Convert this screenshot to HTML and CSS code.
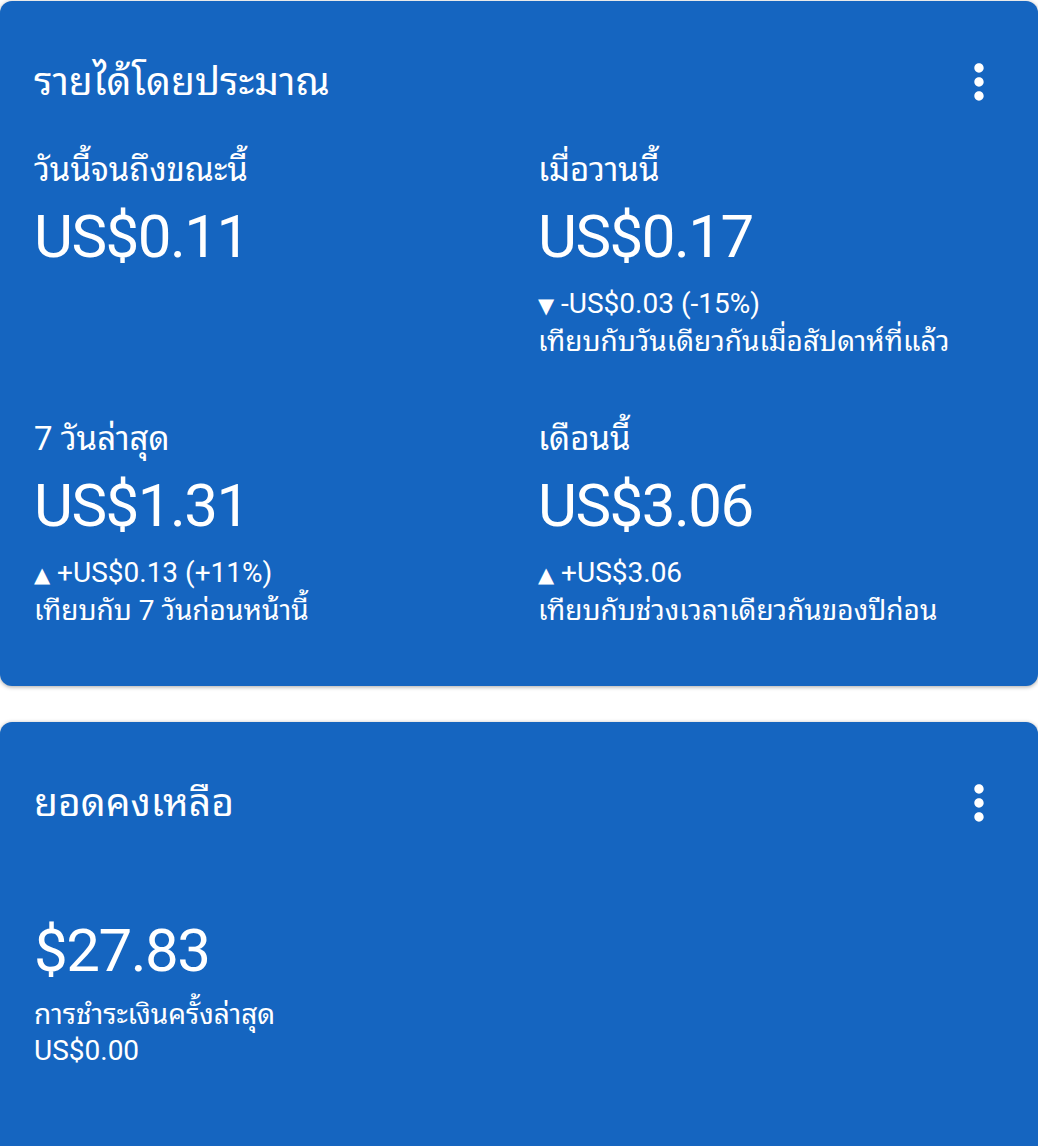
FILE: index.html
```html
<!DOCTYPE html>
<html lang="th">
<head>
    <meta charset="UTF-8">
    <meta name="viewport" content="width=device-width, initial-scale=1.0">
    <title>รายได้โดยประมาณ</title>
    <link rel="stylesheet" href="styles.css">
</head>
<body>
    <div class="container">
        <div class="card">
            <div class="card-header">
                <h2 class="card-title">รายได้โดยประมาณ</h2>
                <button class="menu-button" aria-label="เมนู">
                    <svg viewBox="0 0 24 24" width="56" height="56"><path fill="#fff" d="M12 8c1.1 0 2-.9 2-2s-.9-2-2-2-2 .9-2 2 .9 2 2 2zm0 2c-1.1 0-2 .9-2 2s.9 2 2 2 2-.9 2-2-.9-2-2-2zm0 6c-1.1 0-2 .9-2 2s.9 2 2 2 2-.9 2-2-.9-2-2-2z"/></svg>
                </button>
            </div>

            <div class="stats">
                <div class="stat">
                    <p class="stat-label">วันนี้จนถึงขณะนี้</p>
                    <p class="stat-value">US$0.11</p>
                </div>
                <div class="stat">
                    <p class="stat-label">เมื่อวานนี้</p>
                    <p class="stat-value">US$0.17</p>
                    <p class="stat-change"><span class="arrow">▼</span> -US$0.03 (-15%)</p>
                    <p class="stat-note">เทียบกับวันเดียวกันเมื่อสัปดาห์ที่แล้ว</p>
                </div>
                <div class="stat">
                    <p class="stat-label">7 วันล่าสุด</p>
                    <p class="stat-value">US$1.31</p>
                    <p class="stat-change"><span class="arrow">▲</span> +US$0.13 (+11%)</p>
                    <p class="stat-note">เทียบกับ 7 วันก่อนหน้านี้</p>
                </div>
                <div class="stat">
                    <p class="stat-label">เดือนนี้</p>
                    <p class="stat-value">US$3.06</p>
                    <p class="stat-change"><span class="arrow">▲</span> +US$3.06</p>
                    <p class="stat-note">เทียบกับช่วงเวลาเดียวกันของปีก่อน</p>
                </div>
            </div>
        </div>

        <div class="card">
            <div class="card-header">
                <h2 class="card-title">ยอดคงเหลือ</h2>
                <button class="menu-button" aria-label="เมนู">
                    <svg viewBox="0 0 24 24" width="56" height="56"><path fill="#fff" d="M12 8c1.1 0 2-.9 2-2s-.9-2-2-2-2 .9-2 2 .9 2 2 2zm0 2c-1.1 0-2 .9-2 2s.9 2 2 2 2-.9 2-2-.9-2-2-2zm0 6c-1.1 0-2 .9-2 2s.9 2 2 2 2-.9 2-2-.9-2-2-2z"/></svg>
                </button>
            </div>

            <div class="balance">
                <p class="stat-value">$27.83</p>
                <p class="balance-note">การชำระเงินครั้งล่าสุด</p>
                <p class="balance-note">US$0.00</p>
            </div>
        </div>
    </div>
</body>
</html>
```

FILE: styles.css
```css
* {
    box-sizing: border-box;
    margin: 0;
    padding: 0;
}

body {
    background-color: #fff;
    font-family: Roboto, "Noto Sans Thai Looped", "Noto Sans Thai UI", "Noto Sans Thai", Loma, Garuda, "Noto Sans", sans-serif;
    color: #fff;
    padding-top: 1px;
}

.card {
    background-color: #1565c0;
    border-radius: 12px;
    box-shadow: 0 1px 4px rgba(0, 0, 0, 0.35);
    padding: 0 34px 57px;
    margin-bottom: 36px;
}

.card:last-child {
    padding-bottom: 120px;
}

.card-header {
    display: flex;
    justify-content: space-between;
    align-items: flex-start;
    padding-top: 59px;
}

.card-title {
    font-size: 39px;
    font-weight: 400;
    line-height: 44px;
}

.menu-button {
    display: flex;
    width: 56px;
    height: 56px;
    margin-top: -6px;
    margin-right: -3px;
    background: none;
    border: none;
    cursor: pointer;
}

.stats {
    display: grid;
    grid-template-columns: 1fr 1fr;
    column-gap: 38px;
    row-gap: 61px;
    margin-top: 42px;
}

.stat-label {
    font-size: 33px;
    line-height: 36px;
    margin-bottom: 9px;
}

.stat-value {
    font-size: 60px;
    line-height: 80px;
    letter-spacing: -1.5px;
}

.stat-change {
    font-size: 28px;
    line-height: 36px;
    margin-top: 9px;
}

.arrow {
    font-family: "DejaVu Sans", sans-serif;
    font-size: 21px;
}

.stat-note {
    font-size: 28px;
    line-height: 36px;
}

.balance {
    margin-top: 80px;
}

.balance .stat-value {
    margin-bottom: 6px;
}

.balance-note {
    font-size: 28px;
    line-height: 36px;
}
```
